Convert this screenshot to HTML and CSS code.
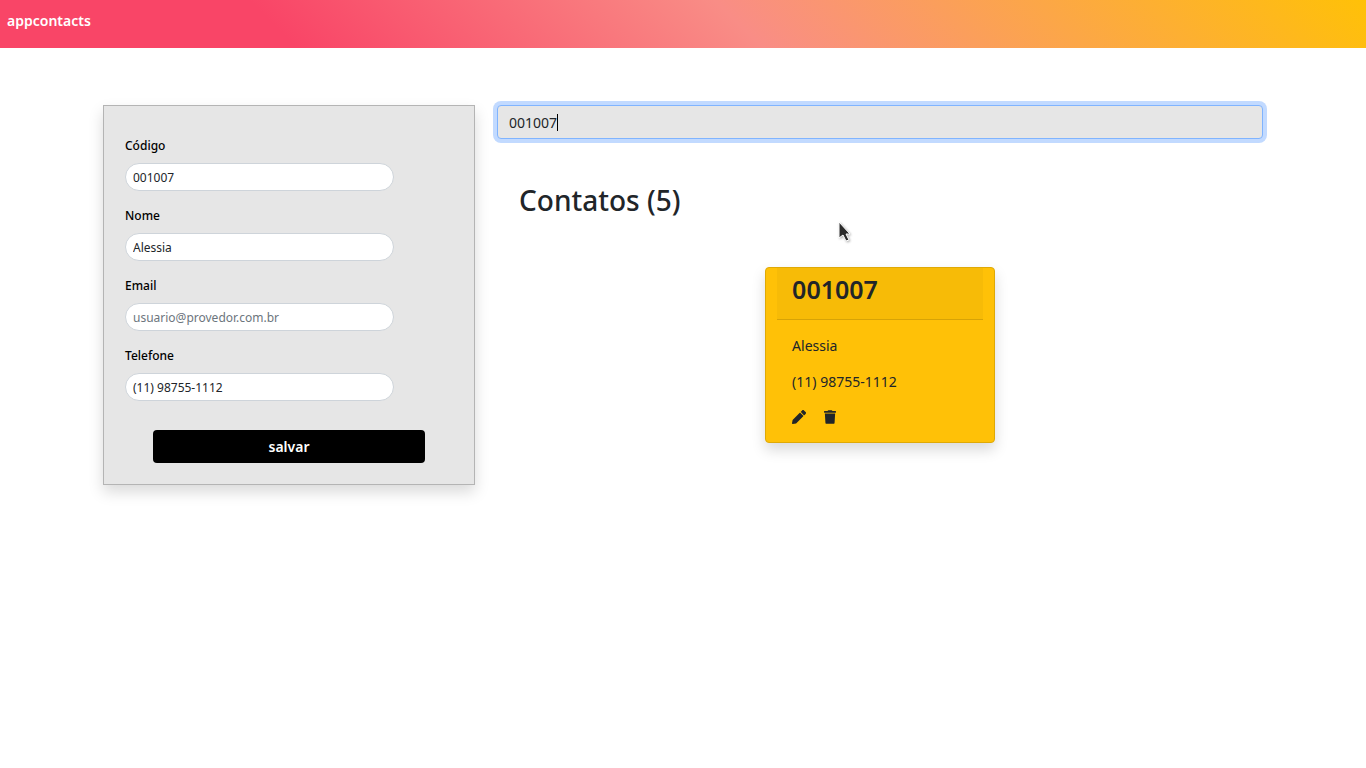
FILE: index.html
```html
<!DOCTYPE html>
<html lang="pt-BR">
<head>
  <meta charset="utf-8">
  <meta name="viewport" content="width=device-width, initial-scale=1">
  <title>appcontacts</title>
  <link rel="stylesheet" href="styles.css">
</head>
<body>
  <header class="navbar">
    <a class="brand" href="#">appcontacts</a>
  </header>
  <main class="layout">
    <form class="contact-form">
      <div class="field">
        <label for="codigo">Código</label>
        <input id="codigo" type="text" value="001007">
      </div>
      <div class="field">
        <label for="nome">Nome</label>
        <input id="nome" type="text" value="Alessia">
      </div>
      <div class="field">
        <label for="email">Email</label>
        <input id="email" type="email" placeholder="usuario@provedor.com.br">
      </div>
      <div class="field">
        <label for="telefone">Telefone</label>
        <input id="telefone" type="tel" value="(11) 98755-1112">
      </div>
      <button class="save" type="button">salvar</button>
    </form>
    <section class="results">
      <div class="search">
        <input class="search-input" type="text" aria-label="Pesquisar" value="001007">
        <span class="caret"></span>
      </div>
      <h2 class="title">Contatos (5)</h2>
      <article class="card">
        <h3 class="card-header">001007</h3>
        <div class="card-body">
          <p>Alessia</p>
          <p>(11) 98755-1112</p>
          <div class="actions">
            <button class="icon-button" type="button" aria-label="Editar">
              <svg viewBox="0 0 512 512" width="14" height="14" fill="currentColor"><path d="M498 142l-46 46c-5 5-12 5-17 0L324 77c-5-5-5-12 0-17l46-46c19-19 49-19 68 0l60 60c19 19 19 49 0 68zm-214-42L22 362 0 484c-3 16 12 30 28 28l122-22 262-262c5-5 5-12 0-17L301 100c-4-5-12-5-17 0z"/></svg>
            </button>
            <button class="icon-button" type="button" aria-label="Excluir">
              <svg viewBox="0 0 448 512" width="12" height="14" fill="currentColor"><path d="M432 32H312l-9-19A24 24 0 0 0 281 0H167a24 24 0 0 0-22 13l-9 19H16A16 16 0 0 0 0 48v32a16 16 0 0 0 16 16h416a16 16 0 0 0 16-16V48a16 16 0 0 0-16-16zM32 128l21 339a48 48 0 0 0 48 45h246a48 48 0 0 0 48-45l21-339z"/></svg>
            </button>
          </div>
        </div>
      </article>
    </section>
  </main>
  <svg class="pointer" viewBox="0 0 14 22" width="14" height="22" aria-hidden="true"><path d="M2 1v16l4-3 3 6 3-1-3-6h4z" fill="#2b2b2b" stroke="#fff"/></svg>
</body>
</html>
```
FILE: styles.css
```css
* {
  box-sizing: border-box;
}

body {
  min-height: 100vh;
  margin: 0;
  background: #fff;
  color: #212529;
  font-family: "Noto Sans", "Open Sans", sans-serif;
  font-size: 14px;
  line-height: 22px;
}

input,
button {
  font: inherit;
  color: inherit;
}

.navbar {
  min-height: 48px;
  padding: 10px 7px;
  background: linear-gradient(45deg, #f94567 21%, #f98d86 54%, #ffc107 100%);
}

.brand {
  display: block;
  color: #fff;
  font-weight: 600;
  text-decoration: none;
}

.layout {
  display: grid;
  grid-template-columns: 372fr 766fr;
  align-items: start;
  gap: 22px;
  max-width: 1160px;
  margin: 0 auto;
  padding: 57px 0;
}

.contact-form {
  display: flex;
  flex-direction: column;
  gap: 14px;
  padding: 29px 21px 21px;
  border: 1px solid #b4b4b4;
  background: #e6e6e6;
  box-shadow: 0 7px 14px rgba(0, 0, 0, 0.15);
}

.field label {
  display: block;
  margin-bottom: 6px;
  color: #000;
  font-size: 12px;
  font-weight: 500;
}

.field input {
  display: block;
  width: 82%;
  height: 28px;
  padding: 0 7px;
  border: 1px solid #ced4da;
  border-radius: 14px;
  background: #fff;
  font-size: 12px;
}

.field input::placeholder {
  color: #6c757d;
}

.save {
  align-self: center;
  width: 83%;
  height: 33px;
  margin-top: 15px;
  border: 0;
  border-radius: 4px;
  background: #000;
  color: #fff;
  font-weight: 600;
}

.results {
  display: flex;
  flex-direction: column;
}

.search {
  position: relative;
}

.search-input {
  display: block;
  width: 100%;
  height: 34px;
  padding: 0 11px;
  border: 1px solid #80b4ff;
  border-radius: 4px;
  outline: 0;
  background: #e6e6e6;
  box-shadow: 0 0 0 4px #c2daff;
}

.caret {
  position: absolute;
  top: 9px;
  left: 60px;
  width: 1px;
  height: 17px;
  background: #000;
}

.title {
  margin: 44px 22px 50px;
  font-size: 28px;
  font-weight: 500;
  line-height: 34px;
}

.card {
  align-self: center;
  width: 30%;
  padding: 0 11px;
  border: 1px solid #dfa906;
  border-radius: 4px;
  background: #ffc107;
  box-shadow: 0 7px 14px rgba(0, 0, 0, 0.15);
}

.card-header {
  margin: 0;
  padding: 7px 15px 15px;
  border-bottom: 1px solid #d7a306;
  background: #f7bb07;
  font-size: 25px;
  font-weight: 600;
  line-height: 29px;
}

.card-body {
  padding: 15px;
}

.card-body p {
  margin: 0 0 14px;
}

.actions {
  display: flex;
  gap: 18px;
  height: 20px;
  align-items: center;
}

.icon-button {
  display: flex;
  padding: 0;
  border: 0;
  background: none;
}

.pointer {
  position: absolute;
  top: 221px;
  left: 837px;
  filter: drop-shadow(1px 1px 1px rgba(0, 0, 0, 0.3));
}
```
